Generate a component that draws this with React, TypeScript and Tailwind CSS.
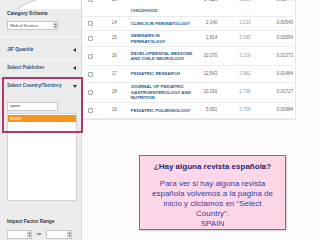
import React from "react";

type Journal = {
  rank: string;
  title: string[];
  cites: string;
  jif: string;
  ef: string;
  h: string;
};

// filas visibles de la tabla JCR
const journals: Journal[] = [
  { rank: "14", title: ["CLINICS IN PERINATOLOGY"], cites: "2,140", jif: "3.233", ef: "0.00543", h: "h-[14px]" },
  { rank: "15", title: ["SEMINARS IN", "PERINATOLOGY"], cites: "2,814", jif: "3.185", ef: "0.00554", h: "h-[16px]" },
  { rank: "16", title: ["DEVELOPMENTAL MEDICINE", "AND CHILD NEUROLOGY"], cites: "10,370", jif: "3.116", ef: "0.01373", h: "h-[19px]" },
  { rank: "17", title: ["PEDIATRIC RESEARCH"], cites: "12,543", jif: "2.982", ef: "0.01484", h: "h-[17px]" },
  { rank: "18", title: ["JOURNAL OF PEDIATRIC", "GASTROENTEROLOGY AND", "NUTRITION"], cites: "10,316", jif: "2.798", ef: "0.01727", h: "h-[20px]" },
  { rank: "19", title: ["PEDIATRIC PULMONOLOGY"], cites: "5,651", jif: "2.758", ef: "0.00984", h: "h-[16px]" },
];

function Checkbox() {
  return <span className="block w-[5px] h-[5px] border border-[#a9a9a9] bg-[#f5f5f5] rounded-[1px]" />;
}

function Row({ j }: { j: Journal }) {
  return (
    <div className={`flex items-center border-b border-[#ececec] ${j.h}`}>
      <div className="w-[13px] pl-[6px]">
        <Checkbox />
      </div>
      <div className="w-[22px] text-right text-[4.5px] text-[#666]">{j.rank}</div>
      <div className="ml-[14px] w-[67px] text-[4.4px] leading-[5.5px] font-bold text-[#235a8c]">
        {j.title.map((t) => (
          <div key={t}>{t}</div>
        ))}
      </div>
      <div className="w-[20px] text-right text-[4.5px] text-[#666]">{j.cites}</div>
      <div className="w-[44px] pl-[22px] text-[4.5px] text-[#8a9cc0]">{j.jif}</div>
      <div className="w-[32px] text-right text-[4.5px] text-[#666]">{j.ef}</div>
    </div>
  );
}

function TriLeft() {
  return (
    <svg width="3" height="4" viewBox="0 0 3 4">
      <path d="M3 0 L0 2 L3 4 Z" fill="#2d3b52" />
    </svg>
  );
}

function TriDown() {
  return (
    <svg width="4" height="3" viewBox="0 0 4 3">
      <path d="M0 0 L4 0 L2 3 Z" fill="#2d3b52" />
    </svg>
  );
}

function Spinner() {
  return (
    <div className="flex flex-col items-center justify-center gap-[1px] w-[4px] h-full bg-[#eeeeee] border-l border-[#d6d6d6]">
      <svg width="3" height="2" viewBox="0 0 3 2"><path d="M0 2 L1.5 0 L3 2 Z" fill="#777" /></svg>
      <svg width="3" height="2" viewBox="0 0 3 2"><path d="M0 0 L3 0 L1.5 2 Z" fill="#777" /></svg>
    </div>
  );
}

export default function App() {
  return (
    <div className="relative w-[320px] h-[240px] overflow-hidden flex bg-white font-['Liberation_Sans',Arial,sans-serif]">
      {/* barra lateral de filtros */}
      <aside className="w-[82px] shrink-0 flex flex-col bg-[#ececec] border-r border-[#d9d9d9]">
        <div className="h-[9px] bg-white">
          <svg width="81" height="9" viewBox="0 0 81 9">
            <path d="M0 0 L36 0 Q24 3 18 9 L0 9 Z" fill="#eeeeee" />
            <path d="M36 0 Q24 3 18 9" stroke="#b9b9b9" strokeWidth="0.8" fill="none" />
          </svg>
        </div>

        <div className="h-[29px] px-[7px] pt-[2px] border-b border-[#f8f8f8]">
          <div className="text-[4.8px] leading-[6px] font-bold text-[#33383f]">Category Schema</div>
          <div className="mt-[4px] w-[51px] h-[9px] flex items-center justify-between bg-white border border-[#c8c8c8] pl-[2px]">
            <span className="text-[4px] text-[#444]">Web of Science</span>
            <Spinner />
          </div>
        </div>

        <div className="h-[22px] pt-[2px] pl-[7px] pr-[5px] flex items-center justify-between border-b border-[#f8f8f8]">
          <span className="text-[4.8px] font-bold text-[#2c5589]">JIF Quartile</span>
          <TriLeft />
        </div>

        <div className="h-[16px] pl-[7px] pr-[5px] flex items-center justify-between">
          <span className="text-[4.8px] font-bold text-[#2c5589]">Select Publisher</span>
          <TriLeft />
        </div>

        <div className="h-[20px] pl-[7px] pr-[4px] flex items-center justify-between">
          <span className="text-[4.8px] font-bold text-[#2c5589]">Select Country/Territory</span>
          <TriDown />
        </div>

        <div className="ml-[7px] mt-[6px] w-[51px] h-[9px] flex items-center bg-white border border-[#c8c8c8] pl-[2px]">
          <span className="text-[4.2px] text-[#333]">spain</span>
        </div>

        <div className="ml-[7px] mt-[2px] w-[70px] h-[88px] bg-white border border-[#d2d2d2] pt-[1px]">
          <div className="h-[7px] bg-[#f7941e] flex items-center pl-[2px]">
            <span className="text-[4px] text-white">SPAIN</span>
          </div>
        </div>

        <div className="mt-[18px] pl-[7px] text-[4.8px] leading-[6px] font-bold text-[#33383f]">Impact Factor Range</div>
        <div className="mt-[5px] pl-[7px] flex items-center">
          <div className="w-[25px] h-[9px] flex justify-end bg-white border border-[#c8c8c8]">
            <Spinner />
          </div>
          <span className="ml-[5px] w-[9px] text-[4.2px] font-bold text-[#444]">to</span>
          <div className="w-[26px] h-[9px] flex justify-end bg-white border border-[#c8c8c8]">
            <Spinner />
          </div>
        </div>
      </aside>

      {/* resultados */}
      <main className="flex-1 flex flex-col bg-[#fcfcfc]">
        <div className="w-[214px] bg-white border-r border-b border-[#e6e6e6] pr-[2px]">
          <div className="flex items-start h-[17px] border-b border-[#ececec] overflow-hidden">
            <div className="w-[13px] pl-[6px] -mt-[3px]">
              <Checkbox />
            </div>
            <div className="w-[22px] text-right text-[4.5px] leading-[5px] text-[#666] -mt-[3px]">13</div>
            <div className="ml-[14px] w-[67px] pt-[8px] text-[4.4px] leading-[5.5px] font-bold text-[#235a8c]">CHILDHOOD</div>
            <div className="w-[20px] text-right text-[4.5px] leading-[5px] text-[#666] -mt-[3px]">14,119</div>
            <div className="w-[44px] pl-[22px] text-[4.5px] leading-[5px] text-[#8a9cc0] -mt-[3px]">3.233</div>
            <div className="w-[32px] text-right text-[4.5px] leading-[5px] text-[#666] -mt-[3px]">0.01744</div>
          </div>
          {journals.map((j) => (
            <Row key={j.rank} j={j} />
          ))}
        </div>

        <div className="ml-[57px] mt-[35px] w-[147px] h-[75px] bg-[#fdd6e7] border border-[#b9517f] shadow-[1px_1px_1px_rgba(0,0,0,0.15)] text-center pt-[6px]">
          <div className="text-[8px] leading-[9px] font-bold text-[#1c2b74]">¿Hay alguna revista española?</div>
          <div className="mt-[8px] text-[8px] leading-[10px] text-[#3443a6]">
            Para ver si hay alguna revista
            <br />
            española volvemos a la pagina de
            <br />
            inicio y cliclamos en “Select
            <br />
            Country”.
            <br />
            SPAIN
          </div>
        </div>
      </main>

      {/* recuadro de resaltado */}
      <div className="absolute left-[2px] top-[77px] w-[81px] h-[56px] border-[2px] border-[#b0386c]" />
    </div>
  );
}
